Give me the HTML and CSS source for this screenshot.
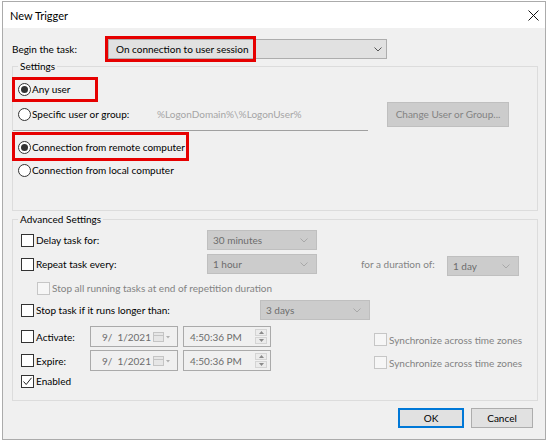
FILE: index.html
```html
<!DOCTYPE html>
<html>
<head>
<meta charset="utf-8">
<title>New Trigger</title>
<link rel="stylesheet" href="styles.css">
</head>
<body>
<div class="window">
  <div class="titlebar">
    <span class="title">New Trigger</span>
    <svg class="close" width="11" height="11" viewBox="0 0 11 11"><path d="M0.5 0.5 L10.5 10.5 M10.5 0.5 L0.5 10.5" stroke="#111" stroke-width="1" fill="none"/></svg>
  </div>
  <div class="content">
    <div class="begin-row">
      <span class="begin-label">Begin the task:</span>
      <div class="combo main-combo">
        <span>On connection to user session</span>
        <svg class="chev" width="8" height="5" viewBox="0 0 8 5"><path d="M0.5 0.5 L4 4 L7.5 0.5" stroke="#555" fill="none"/></svg>
      </div>
    </div>

    <fieldset class="group settings">
      <legend>Settings</legend>
      <div class="row r1"><span class="radio checked"></span><span class="lbl">Any user</span></div>
      <div class="row r2">
        <div class="specific"><span class="radio"></span><span class="lbl">Specific user or group:</span></div>
        <span class="userpath">%LogonDomain%\%LogonUser%</span>
        <div class="btn btn-disabled">Change User or Group...</div>
      </div>
      <div class="sep"></div>
      <div class="row r3"><span class="radio checked"></span><span class="lbl">Connection from remote computer</span></div>
      <div class="row r4"><span class="radio"></span><span class="lbl">Connection from local computer</span></div>
    </fieldset>

    <fieldset class="group advanced">
      <legend>Advanced Settings</legend>
      <div class="arow a-delay">
        <div class="chk-label w-delay"><span class="chk"></span><span class="lbl">Delay task for:</span></div>
        <div class="combo dcombo w110"><span>30 minutes</span><svg class="chev" width="8" height="5" viewBox="0 0 8 5"><path d="M0.5 0.5 L4 4 L7.5 0.5" stroke="#a8a8a8" fill="none"/></svg></div>
      </div>
      <div class="arow a-repeat">
        <div class="chk-label w-delay"><span class="chk"></span><span class="lbl">Repeat task every:</span></div>
        <div class="combo dcombo w110"><span>1 hour</span><svg class="chev" width="8" height="5" viewBox="0 0 8 5"><path d="M0.5 0.5 L4 4 L7.5 0.5" stroke="#a8a8a8" fill="none"/></svg></div>
        <span class="dis-text duration">for a duration of:</span>
        <div class="combo dcombo w72 day"><span>1 day</span><svg class="chev" width="8" height="5" viewBox="0 0 8 5"><path d="M0.5 0.5 L4 4 L7.5 0.5" stroke="#a8a8a8" fill="none"/></svg></div>
      </div>
      <div class="arow a-stopall">
        <span class="chk chk-disabled"></span><span class="dis-text">Stop all running tasks at end of repetition duration</span>
      </div>
      <div class="arow a-stop">
        <div class="chk-label w-stop"><span class="chk"></span><span class="lbl">Stop task if it runs longer than:</span></div>
        <div class="combo dcombo w110"><span>3 days</span><svg class="chev" width="8" height="5" viewBox="0 0 8 5"><path d="M0.5 0.5 L4 4 L7.5 0.5" stroke="#a8a8a8" fill="none"/></svg></div>
      </div>
      <div class="arow a-date a-activate">
        <div class="chk-label w-date"><span class="chk"></span><span class="lbl">Activate:</span></div>
        <div class="picker date">
          <span>9/&nbsp;&nbsp;1/2021</span>
          <span class="cal"><svg width="18" height="10" viewBox="0 0 18 10"><rect x="0.5" y="0.5" width="10" height="9" fill="#e6e6e6" stroke="#c4c4c4"/><path d="M1 3.5 H10" stroke="#c4c4c4"/><path d="M13 4 L17 4 L15 6.5 Z" fill="#b0b0b0"/></svg></span>
        </div>
        <div class="picker time">
          <span>4:50:36 PM</span>
          <span class="spin"><span class="sp up"><svg width="5" height="3" viewBox="0 0 5 3"><path d="M0 3 L2.5 0 L5 3 Z" fill="#8a8a8a"/></svg></span><span class="sp down"><svg width="5" height="3" viewBox="0 0 5 3"><path d="M0 0 L2.5 3 L5 0 Z" fill="#8a8a8a"/></svg></span></span>
        </div>
        <div class="sync"><span class="chk chk-disabled"></span><span class="dis-text">Synchronize across time zones</span></div>
      </div>
      <div class="arow a-date a-expire">
        <div class="chk-label w-date"><span class="chk"></span><span class="lbl">Expire:</span></div>
        <div class="picker date">
          <span>9/&nbsp;&nbsp;1/2021</span>
          <span class="cal"><svg width="18" height="10" viewBox="0 0 18 10"><rect x="0.5" y="0.5" width="10" height="9" fill="#e6e6e6" stroke="#c4c4c4"/><path d="M1 3.5 H10" stroke="#c4c4c4"/><path d="M13 4 L17 4 L15 6.5 Z" fill="#b0b0b0"/></svg></span>
        </div>
        <div class="picker time">
          <span>4:50:36 PM</span>
          <span class="spin"><span class="sp up"><svg width="5" height="3" viewBox="0 0 5 3"><path d="M0 3 L2.5 0 L5 3 Z" fill="#8a8a8a"/></svg></span><span class="sp down"><svg width="5" height="3" viewBox="0 0 5 3"><path d="M0 0 L2.5 3 L5 0 Z" fill="#8a8a8a"/></svg></span></span>
        </div>
        <div class="sync"><span class="chk chk-disabled"></span><span class="dis-text">Synchronize across time zones</span></div>
      </div>
      <div class="arow a-enabled">
        <div class="chk-label"><span class="chk checked"><svg width="11" height="11" viewBox="0 0 11 11"><path d="M1.5 5.5 L4.2 8.5 L9.5 1.8" stroke="#222" stroke-width="1" fill="none"/></svg></span><span class="lbl">Enabled</span></div>
      </div>
    </fieldset>

    <div class="buttons">
      <div class="btn btn-ok">OK</div>
      <div class="btn btn-cancel">Cancel</div>
    </div>
  </div>
</div>

<div class="hl hl-begin"></div>
<div class="hl hl-any"></div>
<div class="hl hl-remote"></div>
</body>
</html>
```

FILE: styles.css
```css
html, body {
  margin: 0;
  padding: 0;
  background: #ffffff;
}

body {
  font-family: Lato, "Liberation Sans", Arial, sans-serif;
  font-size: 10px;
  color: #000;
  position: relative;
  width: 548px;
  height: 444px;
  overflow: hidden;
}

.window {
  margin: 1px 0 0 2px;
  width: 544px;
  height: 439px;
  box-sizing: border-box;
  border: 1px solid #ababab;
  background: #f0f0f0;
  display: flex;
  flex-direction: column;
}

.titlebar {
  height: 26px;
  flex: none;
  background: #ffffff;
  display: flex;
  align-items: center;
  justify-content: space-between;
  padding: 0 6px 0 7px;
}

.title {
  font-size: 11px;
}

.close {
  display: block;
  margin-top: 1px;
}

.content {
  flex: 1;
  padding: 11px 7px 0 9px;
  display: flex;
  flex-direction: column;
}

/* Begin row */
.begin-row {
  display: flex;
  align-items: center;
  height: 20px;
}

.begin-label {
  width: 96px;
}

.combo {
  box-sizing: border-box;
  height: 20px;
  display: flex;
  align-items: center;
  justify-content: space-between;
  white-space: nowrap;
}

.main-combo {
  width: 279px;
  border: 1px solid #adadad;
  background: #e1e1e1;
  padding: 0 4px 0 7px;
}

.chev {
  display: block;
}

/* Group boxes */
.group {
  margin: 0;
  width: 526px;
  box-sizing: border-box;
  border: 1px solid #dcdcdc;
  padding: 0 0 0 5px;
  min-width: 0;
}

.group legend {
  padding: 0 2px;
  margin: 0;
  line-height: 14px;
}

.row {
  display: flex;
  align-items: center;
  height: 18px;
}

.r1 { margin-top: 7px; }
.r2 { margin-top: 3px; height: 26px; }
.r3 { margin-top: 7px; }
.r4 { margin-top: 5px; }

.settings {
  padding-bottom: 31px;
}

.radio {
  width: 13px;
  height: 13px;
  box-sizing: border-box;
  border: 1px solid #333;
  border-radius: 50%;
  background: #fff;
  flex: none;
  display: flex;
  align-items: center;
  justify-content: center;
  margin-right: 1px;
}

.radio.checked::after {
  content: "";
  width: 7px;
  height: 7px;
  border-radius: 50%;
  background: #333;
}

.specific {
  width: 139px;
  display: flex;
  align-items: center;
}

.userpath {
  width: 230px;
  color: #a5a5a5;
  white-space: nowrap;
}

.btn {
  box-sizing: border-box;
  display: flex;
  align-items: center;
  justify-content: center;
  white-space: nowrap;
}

.btn-disabled {
  width: 122px;
  height: 25px;
  background: #cccccc;
  border: 1px solid #bfbfbf;
  color: #838383;
}

.sep {
  margin: 3px 0 0 -5px;
  width: 355px;
  height: 1px;
  background: #a0a0a0;
}

/* Advanced */
.advanced {
  margin-top: 1px;
  padding-bottom: 10px;
}

.arow {
  display: flex;
  align-items: center;
  height: 20px;
}

.a-delay { margin-top: 4px; }
.a-repeat { margin-top: 4px; }
.a-stopall { margin-top: 4px; }
.a-stop { margin-top: 2px; }
.a-activate { margin-top: 6px; height: 21px; }
.a-expire { margin-top: 3px; height: 21px; }
.a-enabled { margin-top: 1px; height: 18px; }

.chk-label {
  display: flex;
  align-items: center;
  padding-left: 3px;
  box-sizing: border-box;
}

.w-delay { width: 189px; }
.w-stop { width: 242px; }
.w-date { width: 72px; }

.chk {
  width: 13px;
  height: 13px;
  box-sizing: border-box;
  border: 1px solid #333;
  background: #fff;
  flex: none;
  margin-right: 2px;
  display: flex;
  align-items: center;
  justify-content: center;
}

.chk svg {
  display: block;
}

.chk-disabled {
  border-color: #c6c6c6;
  background: #f6f6f6;
}

.a-stopall .chk {
  margin-left: 19px;
}

.dis-text {
  color: #838383;
  white-space: nowrap;
}

.dcombo {
  background: #cccccc;
  border: 1px solid #bfbfbf;
  color: #6d6d6d;
  padding: 0 8px 0 5px;
}

.w110 { width: 110px; }
.w72 { width: 72px; }

.duration {
  margin-left: 44px;
  width: 86px;
}

.day {
  align-self: flex-start;
  margin-top: 2px;
}

.picker {
  box-sizing: border-box;
  height: 21px;
  width: 88px;
  border: 1px solid #aaaaaa;
  background: #f0f0f0;
  color: #6d6d6d;
  display: flex;
  align-items: center;
  justify-content: space-between;
  white-space: nowrap;
}

.date {
  padding: 0 6px 0 11px;
}

.time {
  margin-left: 5px;
  padding: 0 3px 0 6px;
}

.cal svg {
  display: block;
}

.spin {
  display: flex;
  flex-direction: column;
  gap: 1px;
}

.sp {
  width: 12px;
  height: 7px;
  box-sizing: border-box;
  border: 1px solid #d4d4d4;
  background: #ebebeb;
  display: flex;
  align-items: center;
  justify-content: center;
}

.sp svg {
  display: block;
}

.sync {
  margin-left: 103px;
  display: flex;
  align-items: center;
  align-self: flex-start;
  margin-top: 7px;
}

.a-expire .sync {
  margin-top: 6px;
}

/* Bottom buttons */
.buttons {
  margin: 7px 5px 0 0;
  display: flex;
  justify-content: flex-end;
  gap: 7px;
}

.btn-ok {
  width: 66px;
  height: 20px;
  border: 2px solid #0078d7;
  background: #e1e1e1;
}

.btn-cancel {
  width: 62px;
  height: 20px;
  border: 1px solid #adadad;
  background: #e1e1e1;
}

/* Annotation highlights */
.hl {
  position: absolute;
  box-sizing: border-box;
  border: 3px solid #e60000;
}

.hl-begin {
  left: 105px;
  top: 36px;
  width: 151px;
  height: 26px;
}

.hl-any {
  left: 12px;
  top: 77px;
  width: 86px;
  height: 25px;
}

.hl-remote {
  left: 12px;
  top: 132px;
  width: 177px;
  height: 29px;
}
```
